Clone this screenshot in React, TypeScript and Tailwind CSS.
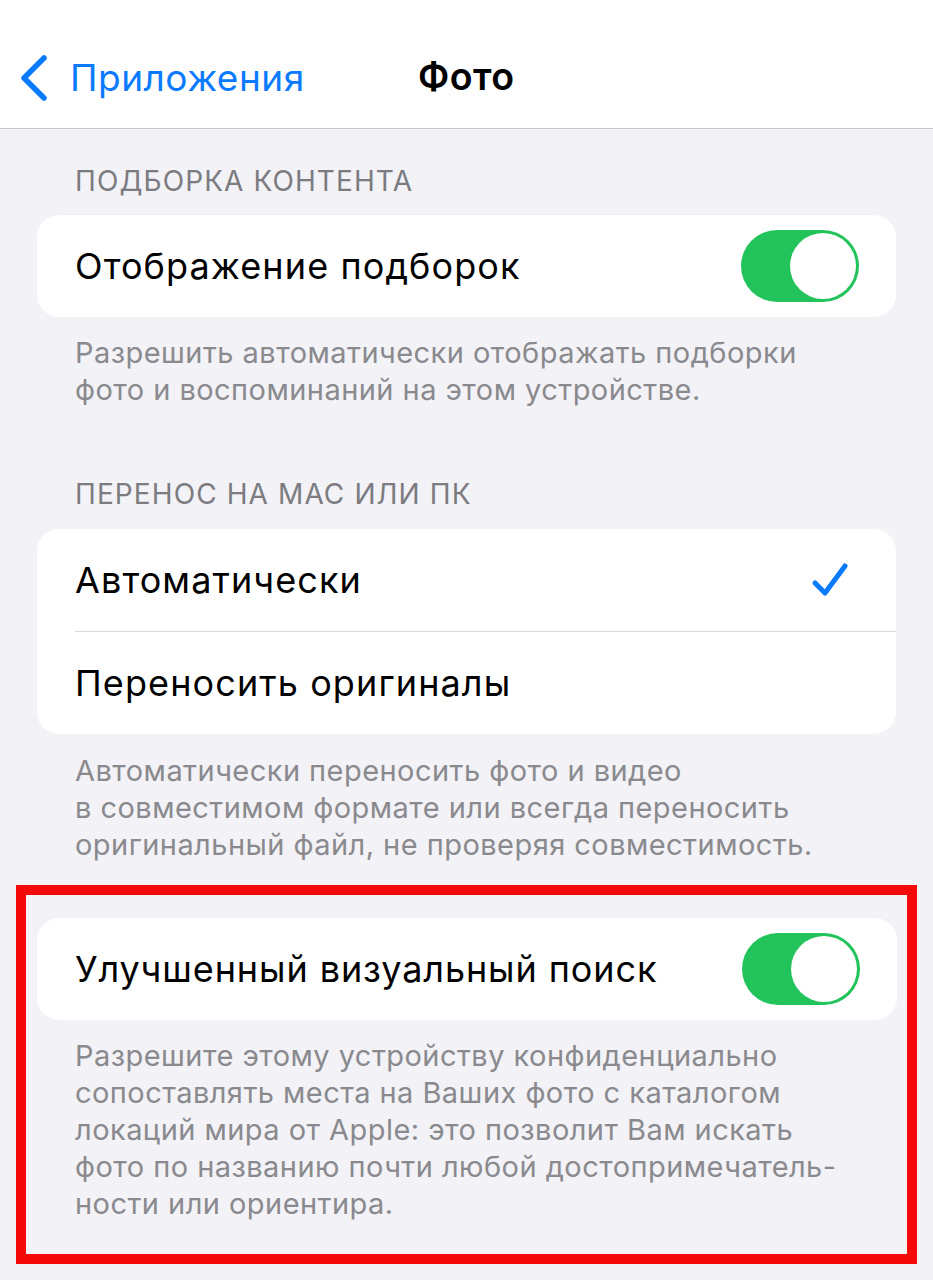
import React from "react";

const font = { fontFamily: "Inter, 'Noto Sans', sans-serif" };

function Toggle() {
  return (
    <div className="w-[118px] h-[72px] rounded-full bg-[#22c35b] flex items-center justify-end pr-[3px]">
      <div className="w-[66px] h-[66px] rounded-full bg-white" />
    </div>
  );
}

function SectionHeader({ children }: { children: React.ReactNode }) {
  return (
    <div className="px-[75px] text-[28px] leading-[32px] text-[#7b7b80] tracking-[1.1px]">
      {children}
    </div>
  );
}

function Footer({ lines, className }: { lines: string[]; className: string }) {
  return (
    <div className={className + " text-[29px] leading-[37px] text-[#8a8a8e] tracking-[0.45px]"}>
      {lines.map((l) => (
        <div key={l}>{l}</div>
      ))}
    </div>
  );
}

export default function App() {
  return (
    <div style={font} className="w-[933px] h-[1280px] bg-[#f2f2f7] overflow-hidden text-black">
      {/* nav bar */}
      <div className="h-[129px] bg-white border-b border-[#c8c8cc] relative flex items-center pt-[27px]">
        <div className="flex items-center pl-[18px] text-[#0a7aff]">
          <svg width="32" height="48" viewBox="0 0 32 48" fill="none">
            <path d="M26 4 L6 24 L26 44" stroke="currentColor" strokeWidth="5.5" strokeLinecap="round" strokeLinejoin="round" />
          </svg>
          <span className="ml-[20px] text-[37px] tracking-[0.5px]">Приложения</span>
        </div>
        <div className="absolute left-[418px] top-[27px] bottom-0 flex items-center text-[37.5px] font-semibold tracking-[0.5px]">
          Фото
        </div>
      </div>

      <div className="pt-[36px] pb-[18px]">
        <SectionHeader>ПОДБОРКА КОНТЕНТА</SectionHeader>
      </div>

      <div className="mx-[37px] h-[102px] bg-white rounded-[22px] flex items-center justify-between pl-[38px] pr-[37px]">
        <span className="text-[36px] tracking-[1.1px]">Отображение подборок</span>
        <Toggle />
      </div>

      <div className="pt-[17px]">
        <Footer
          className="px-[75px]"
          lines={["Разрешить автоматически отображать подборки", "фото и воспоминаний на этом устройстве."]}
        />
      </div>

      <div className="pt-[70px] pb-[19px]">
        <SectionHeader>ПЕРЕНОС НА MAC ИЛИ ПК</SectionHeader>
      </div>

      <div className="mx-[37px] bg-white rounded-[22px]">
        <div className="h-[102px] flex items-center justify-between pl-[38px] pr-[47px]">
          <span className="text-[36px] tracking-[1.1px]">Автоматически</span>
          <svg width="38" height="36" viewBox="0 0 38 36" fill="none" className="text-[#0a7aff]">
            <path d="M4 21 L14 31 L34 4" stroke="currentColor" strokeWidth="5" strokeLinecap="round" strokeLinejoin="round" />
          </svg>
        </div>
        <div className="ml-[38px] h-px bg-[#d9d9dd]" />
        <div className="h-[102px] flex items-center pl-[38px]">
          <span className="text-[36px] tracking-[1.1px]">Переносить оригиналы</span>
        </div>
      </div>

      <div className="pt-[18px]">
        <Footer
          className="px-[75px]"
          lines={[
            "Автоматически переносить фото и видео",
            "в совместимом формате или всегда переносить",
            "оригинальный файл, не проверяя совместимость.",
          ]}
        />
      </div>

      <div className="mt-[22px] ml-[16px] w-[901px] border-[10px] border-[#f40a0a] pt-[23px] pb-[32px]">
        <div className="ml-[11px] mr-[10px] h-[102px] bg-white rounded-[22px] flex items-center justify-between pl-[38px] pr-[37px]">
          <span className="text-[36px] tracking-[0.9px]">Улучшенный визуальный поиск</span>
          <Toggle />
        </div>
        <div className="pt-[17px]">
          <Footer
            className="pl-[49px] leading-[37.5px]"
            lines={[
              "Разрешите этому устройству конфиденциально",
              "сопоставлять места на Ваших фото с каталогом",
              "локаций мира от Apple: это позволит Вам искать",
              "фото по названию почти любой достопримечатель-",
              "ности или ориентира.",
            ]}
          />
        </div>
      </div>
    </div>
  );
}
